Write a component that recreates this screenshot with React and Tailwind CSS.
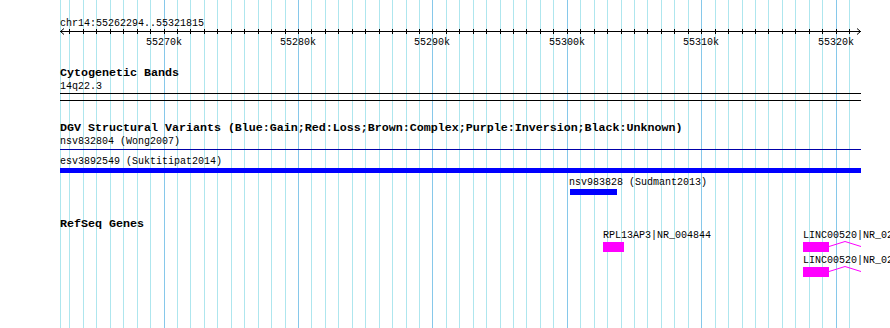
import React from 'react';

// genomic window drawn across 800px starting at x=60
const START = 55262294;
const END = 55321815;
const LEFT = 60;
const WIDTH = 800;
const toX = (pos) => Math.round(LEFT + ((pos - START) * WIDTH) / (END - START));

const ticks = [];
for (let p = 55263000; p < END; p += 1000) ticks.push(p);
const majors = ticks.filter((p) => p % 10000 === 0);

const GridLines = () => (
  <svg className="absolute inset-0" width="890" height="328">
    <line x1={LEFT + 0.5} y1="0" x2={LEFT + 0.5} y2="328" stroke="#aee6ee" />
    {ticks.map((p) => (
      <line
        key={p}
        x1={toX(p) + 0.5}
        y1="0"
        x2={toX(p) + 0.5}
        y2="328"
        stroke={p % 10000 === 0 ? '#86c8ea' : '#aee6ee'}
      />
    ))}
  </svg>
);

const Ruler = () => (
  <div className="relative h-[18px] w-[801px]">
    <svg className="absolute left-0 top-[-3px] overflow-visible" width="802" height="8">
      <line x1="0" y1="4.5" x2="801" y2="4.5" stroke="#000" />
      <polyline points="4,1.5 0.5,4.5 4,7.5" fill="none" stroke="#000" />
      <polyline points="797,1.5 800.5,4.5 797,7.5" fill="none" stroke="#000" />
      {ticks.map((p) => (
        <line key={p} x1={toX(p) - LEFT + 0.5} y1="2" x2={toX(p) - LEFT + 0.5} y2="7" stroke="#000" />
      ))}
    </svg>
    {majors.map((p) => (
      <span
        key={p}
        className="absolute top-[6px] w-[36px] text-center text-[10px] leading-[13px]"
        style={{ left: toX(p) - LEFT - 18 }}
      >
        {p / 1000}k
      </span>
    ))}
  </div>
);

const Intron = ({ x }) => (
  <svg className="absolute overflow-visible" style={{ left: x, top: 0 }} width="33" height="10">
    <polyline points="0,4.5 16,-0.5 32,4.5" fill="none" stroke="#ff00ff" />
  </svg>
);

const Gene = ({ label, start, boxW, top, intron }) => {
  const x = toX(start) - LEFT;
  return (
    <>
      <span className="absolute whitespace-nowrap text-[10px] leading-[13px]" style={{ left: x, top }}>
        {label}
      </span>
      <div className="absolute h-[10px] bg-[#ff00ff]" style={{ left: x, top: top + 13, width: boxW }} />
      {intron && (
        <div className="absolute" style={{ left: 0, top: top + 13 }}>
          <Intron x={x + boxW} />
        </div>
      )}
    </>
  );
};

export default function App() {
  return (
    <div className="relative h-[328px] w-[890px] overflow-hidden bg-white text-black font-['Liberation_Mono','DejaVu_Sans_Mono',monospace]">
      <GridLines />
      <div className="relative flex flex-col pl-[60px] pt-[17px]">
        <div className="text-[10px] leading-[13px] h-[13px]">chr14:55262294..55321815</div>
        <Ruler />

        <div className="mt-[19px] h-[13px] text-[11.667px] font-bold leading-[13px]">Cytogenetic Bands</div>
        <div className="mt-[1px] h-[12px] text-[10px] leading-[12px]">14q22.3</div>
        <div className="h-[8px] w-[801px] border-y border-black" />

        <div className="mt-[21px] h-[13px] whitespace-nowrap text-[11.667px] font-bold leading-[13px]">
          DGV Structural Variants (Blue:Gain;Red:Loss;Brown:Complex;Purple:Inversion;Black:Unknown)
        </div>
        <div className="h-[13px] text-[10px] leading-[13px]">nsv832804 (Wong2007)</div>
        <div className="mt-[1px] h-px w-[801px] bg-[#0000a8]" />
        <div className="mt-[5px] h-[13px] text-[10px] leading-[13px]">esv3892549 (Suktitipat2014)</div>
        <div className="h-[5px] w-[801px] bg-[#0000ff]" />
        <div className="relative h-[27px]">
          <span className="absolute left-[509px] top-[3px] whitespace-nowrap text-[10px] leading-[13px]">
            nsv983828 (Sudmant2013)
          </span>
          <div className="absolute left-[510px] top-[16px] h-[6px] w-[47px] bg-[#0000ff]" />
        </div>

        <div className="mt-[18px] h-[13px] text-[11.667px] font-bold leading-[13px]">RefSeq Genes</div>
        <div className="relative h-[50px]">
          <Gene label="RPL13AP3|NR_004844" start={55302700} boxW={21} top={-2} />
          <Gene label="LINC00520|NR_026796" start={55317550} boxW={26} top={-2} intron />
          <Gene label="LINC00520|NR_026797" start={55317550} boxW={26} top={23} intron />
        </div>
      </div>
    </div>
  );
}
